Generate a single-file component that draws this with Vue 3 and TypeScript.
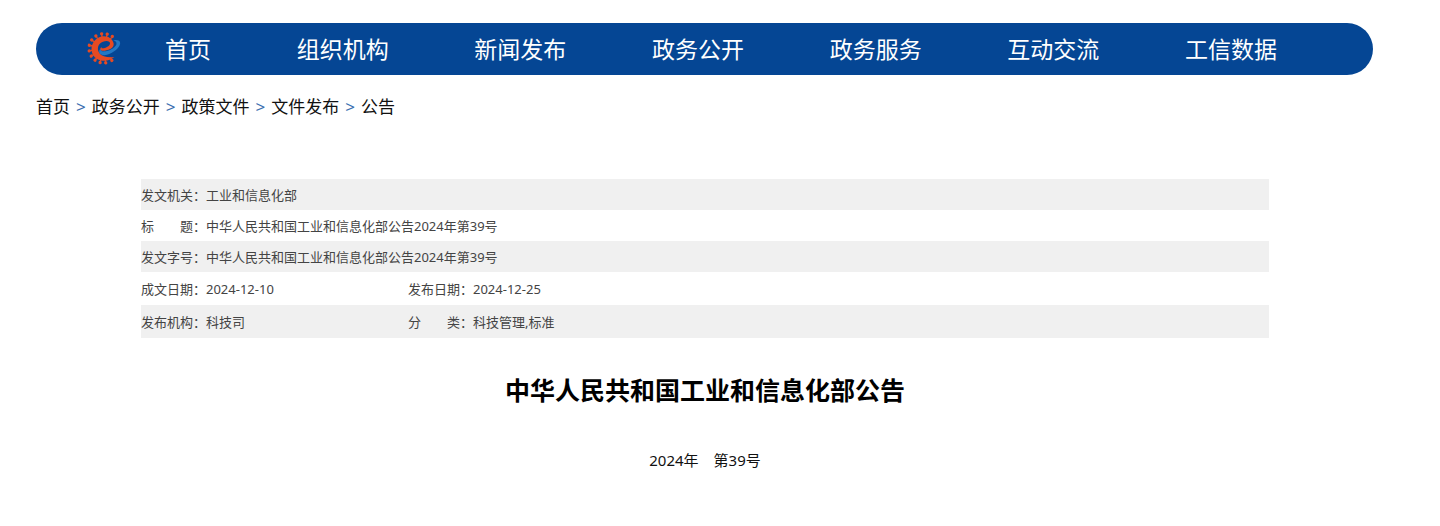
<script setup lang="ts">
interface Field {
  label: string
  value: string
}

const navItems: string[] = ['首页', '组织机构', '新闻发布', '政务公开', '政务服务', '互动交流', '工信数据']
const crumbs: string[] = ['首页', '政务公开', '政策文件', '文件发布', '公告']

const rows: Field[][] = [
  [{ label: '发文机关：', value: '工业和信息化部' }],
  [{ label: '标　　题：', value: '中华人民共和国工业和信息化部公告2024年第39号' }],
  [{ label: '发文字号：', value: '中华人民共和国工业和信息化部公告2024年第39号' }],
  [
    { label: '成文日期：', value: '2024-12-10' },
    { label: '发布日期：', value: '2024-12-25' },
  ],
  [
    { label: '发布机构：', value: '科技司' },
    { label: '分　　类：', value: '科技管理,标准' },
  ],
]

// Directions of the gear teeth round the ring, in degrees.
const teeth: number[] = [-54, -76, -98, -122, -145, -168, 170, 148, 126, 104, 82, 56]
</script>

<template>
  <div class="page" lang="zh-CN">
    <header class="bar">
      <svg class="logo" viewBox="0 0 120 120" aria-hidden="true">
        <g fill="#e64a22">
          <g v-for="a in teeth" :key="a" :transform="`rotate(${a} 56 58)`">
            <path d="M90 56h7v4h-7z" />
            <circle cx="100" cy="58" r="5" />
          </g>
          <path d="M86 44C82 22 52 14 33 31C13 48 16 78 36 90C52 99 76 96 88 84C70 87 51 83 43 72C34 58 40 43 54 38C66 34 76 37 75 44C74 51 62 57 52 58C50 58 49 56 50 54C44 58 44 64 51 65C66 66 88 58 86 44Z" />
        </g>
        <path d="M85 34C102 30 112 39 101 54C88 71 60 85 47 76C40 71 42 62 47 59C46 65 51 68 57 67C72 66 88 58 94 47C96 40 93 37 85 34Z" fill="#2378c4" />
      </svg>
      <nav class="nav" aria-label="主导航">
        <a v-for="item in navItems" :key="item" href="#">{{ item }}</a>
      </nav>
    </header>

    <nav class="crumbs" aria-label="当前位置">
      <template v-for="(crumb, i) in crumbs" :key="crumb">
        <span v-if="i > 0" class="sep">&gt;</span>
        <a href="#">{{ crumb }}</a>
      </template>
    </nav>

    <main class="article">
      <table class="meta">
        <colgroup>
          <col class="label-col" />
          <col class="first-col" />
          <col class="label-col" />
          <col />
        </colgroup>
        <tbody>
          <tr v-for="(row, r) in rows" :key="r" :class="{ tall: row.length > 1 }">
            <template v-for="field in row" :key="field.label">
              <th scope="row">{{ field.label }}</th>
              <td :colspan="row.length > 1 ? 1 : 3">{{ field.value }}</td>
            </template>
          </tr>
        </tbody>
      </table>
      <h1>中华人民共和国工业和信息化部公告</h1>
      <p class="number">2024年　第39号</p>
    </main>
  </div>
</template>

<style>
body {
  margin: 0;
  background: #fff;
}
</style>

<style scoped>
.page {
  padding: 23px 67px 48px 36px;
  font-family: "Noto Sans", "Noto Sans CJK SC", sans-serif;
  color: #000;
}

a {
  color: inherit;
  text-decoration: none;
  white-space: nowrap;
}

.bar {
  display: flex;
  align-items: center;
  height: 52px;
  padding: 0 96px 0 49px;
  border-radius: 26px;
  background: #054694;
  box-sizing: border-box;
}

.logo {
  flex: none;
  width: 40px;
  height: 40px;
}

.nav {
  flex: 1;
  display: flex;
  justify-content: space-between;
  margin-left: 40px;
  color: #fff;
  font-size: 23px;
  line-height: 32px;
}

.crumbs {
  display: flex;
  gap: 6px;
  margin-top: 20px;
  font-size: 17px;
  line-height: 24px;
  color: #111;
}

.sep {
  color: #3b6fb0;
}

.article {
  margin: 60px 104px 0 105px;
}

.meta {
  width: 100%;
  table-layout: fixed;
  border-collapse: collapse;
  font-size: 13px;
  line-height: 20px;
  color: #444;
}

.label-col {
  width: 65px;
}

.first-col {
  width: 202px;
}

.meta tr {
  height: 31px;
}

.meta tr.tall {
  height: 33px;
}

.meta tr:nth-child(odd) {
  background: #f0f0f0;
}

.meta th,
.meta td {
  padding: 0;
  font-weight: 400;
  text-align: left;
  white-space: nowrap;
}

h1 {
  margin: 34px 0 0;
  font-size: 25px;
  line-height: 36px;
  font-weight: 700;
  text-align: center;
}

.number {
  margin: 40px 0 0;
  font-size: 15px;
  line-height: 24px;
  text-align: center;
  color: #111;
}
</style>
